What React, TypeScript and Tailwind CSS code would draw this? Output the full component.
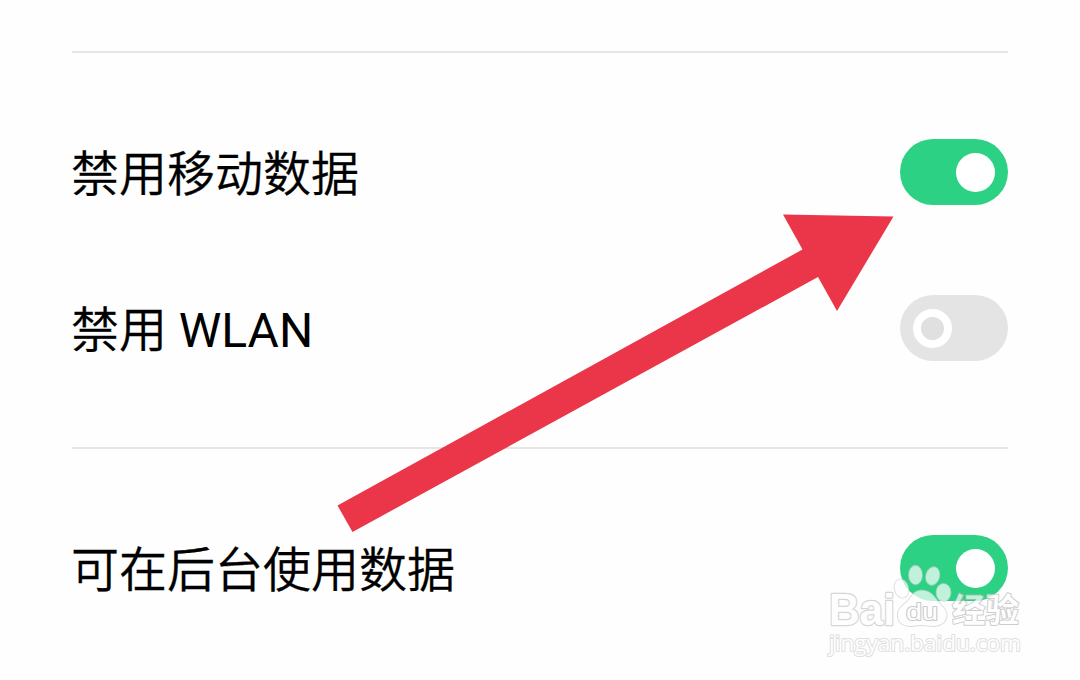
import React from "react";

interface SettingRowProps {
  label: React.ReactNode;
  enabled: boolean;
}

function Toggle({ enabled }: { enabled: boolean }) {
  return (
    <div
      role="switch"
      aria-checked={enabled}
      className={`flex h-[66px] w-[108px] items-center rounded-full px-[13px] ${
        enabled ? "justify-end bg-[#2dd184]" : "justify-start bg-[#e4e4e4]"
      }`}
    >
      <div
        className={`size-[39px] rounded-full ${
          enabled ? "bg-white" : "border-[8px] border-white bg-[#e0e0e0]"
        }`}
      />
    </div>
  );
}

function SettingRow({ label, enabled }: SettingRowProps) {
  return (
    <div className="flex h-[156px] items-center justify-between">
      <span className="-ml-px pt-1.5 text-[48px] leading-none font-[350] whitespace-nowrap text-black [-webkit-text-stroke:0.3px_black]">
        {label}
      </span>
      <Toggle enabled={enabled} />
    </div>
  );
}

function Arrow() {
  return (
    <svg className="absolute inset-0" width="1080" height="680" viewBox="0 0 1080 680">
      <polygon
        points="783,214.5 893.5,216.5 837,311 818,277 352.5,532 337.5,505.5 802.5,249.5"
        fill="#ea3648"
      />
    </svg>
  );
}

function Watermark() {
  return (
    <svg
      className="absolute top-[560px] left-[820px] opacity-70"
      width="210"
      height="100"
      viewBox="820 560 210 100"
      fill="#fff"
      stroke="#c6c6c6"
      strokeWidth="2"
      strokeLinejoin="round"
      paintOrder="stroke"
    >
      <text
        x="829"
        y="624.5"
        textLength="66"
        lengthAdjust="spacingAndGlyphs"
        strokeWidth="2.4"
        className="font-['Liberation_Sans'] text-[44px] font-bold"
      >
        Bai
      </text>

      {/* Paw */}
      <g strokeWidth="1.8" stroke="#cdcdcd">
        <ellipse cx="901.5" cy="588.5" rx="6.7" ry="9.3" transform="rotate(-15 901.5 588.5)" />
        <ellipse cx="915.5" cy="575" rx="6.5" ry="9.3" />
        <ellipse cx="932.7" cy="576" rx="6.5" ry="9" transform="rotate(15 932.7 576)" />
        <ellipse cx="943.5" cy="592.5" rx="7" ry="8.7" />
        <path d="M921.500 590.5c-6 0-9 4-12 8.500-4 5-10.500 8-11.500 14-1 8 4 13 12 13 4 0 7-1 11-1s7 1 12 1c9 0 14-5 13.500-12-.5-6-6-9-9.500-13.500-4-6-8.500-10-15.500-10z" />
      </g>
      <text
        x="906"
        y="619.5"
        textLength="32"
        lengthAdjust="spacingAndGlyphs"
        stroke="#b4b4b4"
        className="font-['Liberation_Sans'] text-[24px]"
      >
        du
      </text>

      <text
        x="952"
        y="622"
        textLength="67"
        lengthAdjust="spacingAndGlyphs"
        stroke="#b8b8b8"
        className="font-['Noto_Sans_CJK_SC',sans-serif] text-[33px] font-bold"
      >
        经验
      </text>
      <text
        x="829"
        y="650.5"
        textLength="192"
        lengthAdjust="spacingAndGlyphs"
        stroke="#d2d2d2"
        className="font-['Open_Sans'] text-[22px] font-medium"
      >
        jingyan.baidu.com
      </text>
    </svg>
  );
}

export default function App() {
  return (
    <div className="relative h-[680px] w-[1080px] overflow-hidden bg-[#fefefe] px-[72px] pt-[51px] font-[Roboto,'Noto_Sans_CJK_SC',sans-serif]">
      <section className="h-[396px] border-t-2 border-[#e6e6e6] pt-[41px]">
        <SettingRow label="禁用移动数据" enabled />
        <SettingRow
          label={
            <>
              禁用 <span className="font-normal [-webkit-text-stroke:0]">WLAN</span>
            </>
          }
          enabled={false}
        />
      </section>
      <section className="border-t-2 border-[#e6e6e6] pt-[41px]">
        <SettingRow label="可在后台使用数据" enabled />
      </section>

      <Arrow />
      <Watermark />
    </div>
  );
}
